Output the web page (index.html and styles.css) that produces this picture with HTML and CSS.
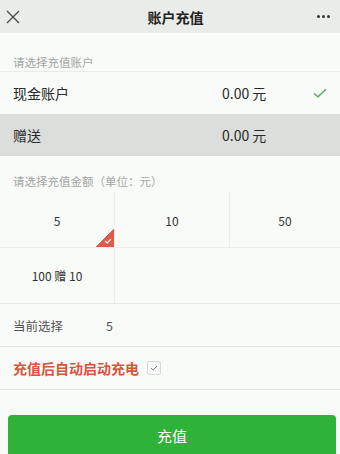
FILE: index.html
```html
<!DOCTYPE html>
<html>
<head>
<meta charset="utf-8">
<link rel="stylesheet" href="styles.css">
</head>
<body>
<div class="page">
  <header class="topbar">
    <svg class="close" width="14" height="14" viewBox="0 0 14 14"><path d="M1 1L13 13M13 1L1 13" stroke="#4a4a4a" stroke-width="1.3" fill="none"/></svg>
    <div class="title">账户充值</div>
    <div class="more"><span></span><span></span><span></span></div>
  </header>

  <div class="label">请选择充值账户</div>
  <div class="acct">
    <div class="acct-name">现金账户</div>
    <div class="acct-amt">0.00 元</div>
    <svg class="tick" width="14" height="10" viewBox="0 0 14 10"><path d="M1 5.5L5 8.8L13 1.2" stroke="#4caf50" stroke-width="1.4" fill="none"/></svg>
  </div>
  <div class="acct acct-gray">
    <div class="acct-name">赠送</div>
    <div class="acct-amt">0.00 元</div>
  </div>

  <div class="label label2">请选择充值金额（单位：元）</div>
  <div class="grid">
    <div class="cell selected">5
      <div class="corner"><svg width="8" height="6" viewBox="0 0 8 6"><path d="M1 3L3.2 5L7 1" stroke="#fff" stroke-width="1.1" fill="none"/></svg></div>
    </div>
    <div class="cell">10</div>
    <div class="cell last">50</div>
    <div class="cell">100 赠 10</div>
    <div class="cell last empty"></div>
    <div class="cell last empty"></div>
  </div>

  <div class="row current">
    <span class="cur-label">当前选择</span>
    <span class="cur-val">5</span>
  </div>
  <div class="row auto">
    <span class="auto-text">充值后自动启动充电</span>
    <span class="checkbox"><svg width="8" height="6" viewBox="0 0 8 6"><path d="M1 3L3.2 5L7 1" stroke="#777" stroke-width="1" fill="none"/></svg></span>
  </div>

  <div class="btn-wrap">
    <div class="btn">充值</div>
  </div>
</div>
</body>
</html>
```

FILE: styles.css
```css
* { box-sizing: border-box; }
html, body { margin: 0; padding: 0; }
body {
  font-family: "Noto Sans CJK SC", "Noto Sans", sans-serif;
  background: #f8fbf8;
  color: #333;
  width: 340px;
  height: 454px;
  overflow: hidden;
}
.page { display: flex; flex-direction: column; }
.topbar {
  height: 33px;
  background: #eaece9;
  display: flex;
  align-items: center;
  justify-content: space-between;
  padding: 0 9px 0 6px;
}
.title {
  font-size: 14px;
  font-weight: bold;
  color: #222;
  margin-left: 14px;
}
.more { display: flex; gap: 2px; width: 14px; }
.more span { width: 3px; height: 3px; background: #333; border-radius: 50%; display: block; }

.label {
  font-size: 11.5px;
  color: #a3a6a3;
  padding: 20px 13px 0;
  line-height: 18px;
  height: 39px;
  border-bottom: 1px solid #e9ece9;
}
.label2 {
  padding-top: 16px;
  height: 37px;
  border-bottom: none;
}
.acct {
  height: 42px;
  display: flex;
  align-items: center;
  padding: 0 13px;
  font-size: 14px;
  color: #2a2a2a;
}
.acct-gray { background: #dcdedc; }
.acct-name { width: 209px; }
.acct-amt { flex: 1; }

.grid {
  display: grid;
  grid-template-columns: 115px 115px 1fr;
  grid-auto-rows: 55px;
  border-bottom: 1px solid #e6e9e6;
}
.cell {
  display: flex;
  align-items: center;
  justify-content: center;
  font-size: 12px;
  color: #333;
  border-right: 1px solid #eceeec;
  position: relative;
}
.cell:nth-child(-n+3) { border-bottom: 1px solid #eceeec; }
.cell.last { border-right: none; }
.corner {
  position: absolute;
  right: 0;
  bottom: 0;
  width: 18px;
  height: 18px;
  background: linear-gradient(135deg, transparent 50%, #e15a4b 50%);
}
.corner svg { position: absolute; right: 2px; bottom: 3px; }

.row {
  height: 43px;
  display: flex;
  align-items: center;
  padding: 0 13px;
  border-bottom: 1px solid #dfe2df;
}
.current { font-size: 12.5px; color: #555; }
.cur-label { width: 93px; }
.auto-text { color: #d9543e; font-size: 14px; font-weight: bold; }
.checkbox {
  margin-left: 8px;
  width: 14px;
  height: 14px;
  border: 1px solid #d6d8d6;
  background: #fafafa;
  border-radius: 2px;
  display: flex;
  align-items: center;
  justify-content: center;
}
.btn-wrap { padding: 25px 4px 0 8px; }
.btn {
  height: 44px;
  background: #2eb238;
  border-radius: 4px;
  color: #fff;
  font-size: 15px;
  display: flex;
  align-items: center;
  justify-content: center;
  padding-bottom: 4px;
}
```
